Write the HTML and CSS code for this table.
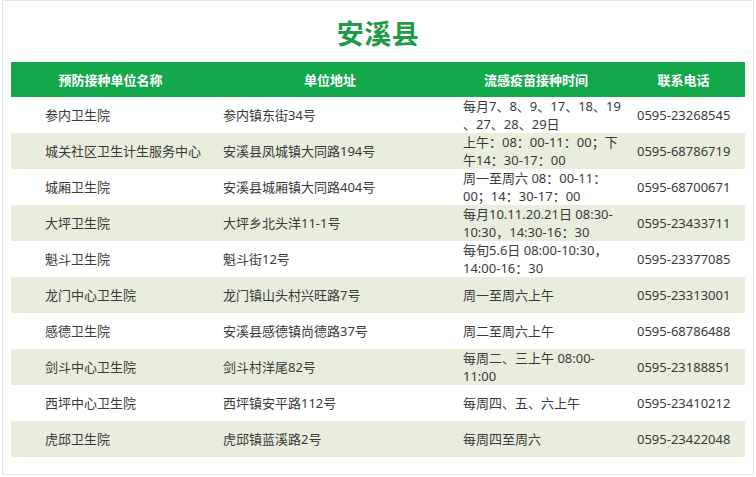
FILE: index.html
```html
<!DOCTYPE html>
<html lang="zh-CN">
<head>
<meta charset="utf-8">
<title>安溪县</title>
<link rel="stylesheet" href="styles.css">
</head>
<body>
<div class="frame">
  <h1 class="title">安溪县</h1>
  <table class="grid">
    <colgroup>
      <col class="c1"><col class="c2"><col class="c3"><col class="c4">
    </colgroup>
    <thead>
      <tr><th>预防接种单位名称</th><th>单位地址</th><th>流感疫苗接种时间</th><th>联系电话</th></tr>
    </thead>
    <tbody>
      <tr><td>参内卫生院</td><td>参内镇东街34号</td><td>每月7、8、9、17、18、19<br>、27、28、29日</td><td>0595-23268545</td></tr>
      <tr><td>城关社区卫生计生服务中心</td><td>安溪县凤城镇大同路194号</td><td>上午：08：00-11：00；下<br>午14：30-17：00</td><td>0595-68786719</td></tr>
      <tr><td>城厢卫生院</td><td>安溪县城厢镇大同路404号</td><td>周一至周六 08：00-11：<br>00；14：30-17：00</td><td>0595-68700671</td></tr>
      <tr><td>大坪卫生院</td><td>大坪乡北头洋11-1号</td><td>每月10.11.20.21日 08:30-<br>10:30，14:30-16：30</td><td>0595-23433711</td></tr>
      <tr><td>魁斗卫生院</td><td>魁斗街12号</td><td>每旬5.6日 08:00-10:30，<br>14:00-16：30</td><td>0595-23377085</td></tr>
      <tr><td>龙门中心卫生院</td><td>龙门镇山头村兴旺路7号</td><td>周一至周六上午</td><td>0595-23313001</td></tr>
      <tr><td>感德卫生院</td><td>安溪县感德镇尚德路37号</td><td>周二至周六上午</td><td>0595-68786488</td></tr>
      <tr><td>剑斗中心卫生院</td><td>剑斗村洋尾82号</td><td>每周二、三上午 08:00-<br>11:00</td><td>0595-23188851</td></tr>
      <tr><td>西坪中心卫生院</td><td>西坪镇安平路112号</td><td>每周四、五、六上午</td><td>0595-23410212</td></tr>
      <tr><td>虎邱卫生院</td><td>虎邱镇蓝溪路2号</td><td>每周四至周六</td><td>0595-23422048</td></tr>
    </tbody>
  </table>
</div>
</body>
</html>
```
FILE: styles.css
```css
html, body {
  margin: 0;
  padding: 0;
  background: #ffffff;
}

body {
  font-family: "Noto Sans", "Noto Sans CJK SC", sans-serif;
  color: #333333;
}

.frame {
  box-sizing: border-box;
  width: 752px;
  height: 475px;
  margin-left: 2px;
  border: 1px solid #e6e6e6;
  padding: 0 8px 0 8px;
}

.title {
  margin: 0;
  height: 61px;
  display: flex;
  align-items: center;
  justify-content: center;
  font-family: "Noto Sans CJK SC", sans-serif;
  font-size: 27px;
  font-weight: 700;
  color: #1e9b47;
  padding-top: 1px;
  box-sizing: border-box;
  letter-spacing: 0.5px;
}

.grid {
  width: 734px;
  border-collapse: collapse;
  table-layout: fixed;
  font-size: 13px;
}

.c1 { width: 199px; }
.c2 { width: 240px; }
.c3 { width: 172px; }
.c4 { width: 123px; }

.grid th {
  height: 35px;
  padding: 0;
  background: #13a84b;
  color: #ffffff;
  font-weight: 700;
  font-size: 13px;
  text-align: center;
  vertical-align: middle;
}

.grid td {
  height: 36px;
  padding: 0 0 0 13px;
  line-height: 18px;
  text-align: left;
  vertical-align: middle;
  white-space: nowrap;
  color: #3a3a3a;
}

.grid td:first-child {
  padding-left: 34px;
}

.grid td:nth-child(3) {
  padding-left: 13px;
}

.grid td:nth-child(4) {
  padding-left: 15px;
}

.grid tbody tr:nth-child(even) td {
  background: #e8eddc;
}
```
